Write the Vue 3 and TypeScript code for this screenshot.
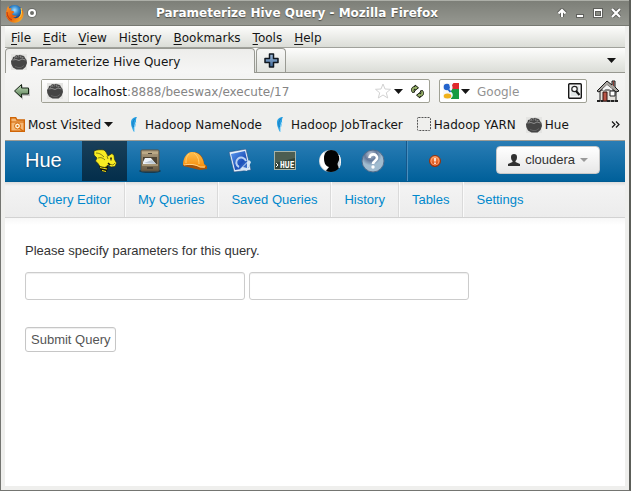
<script setup lang="ts">
import { ref } from 'vue'

interface MenuEntry { key: string; before: string; after: string }
interface Bookmark { label: string; icon: 'folder' | 'feather' | 'blank' | 'hue'; menu?: boolean }

const menus: MenuEntry[] = [
  { before: '', key: 'F', after: 'ile' },
  { before: '', key: 'E', after: 'dit' },
  { before: '', key: 'V', after: 'iew' },
  { before: 'Hi', key: 's', after: 'tory' },
  { before: '', key: 'B', after: 'ookmarks' },
  { before: '', key: 'T', after: 'ools' },
  { before: '', key: 'H', after: 'elp' },
]

const bookmarks: Bookmark[] = [
  { label: 'Most Visited', icon: 'folder', menu: true },
  { label: 'Hadoop NameNode', icon: 'feather' },
  { label: 'Hadoop JobTracker', icon: 'feather' },
  { label: 'Hadoop YARN', icon: 'blank' },
  { label: 'Hue', icon: 'hue' },
]

const apps: string[] = ['Beeswax', 'File Browser', 'Job Browser', 'Job Designer', 'Shell', 'User Admin', 'Help']
const sections: string[] = ['Query Editor', 'My Queries', 'Saved Queries', 'History', 'Tables', 'Settings']

const first = ref('')
const second = ref('')
const search = ref('')
</script>

<template>
  <div class="window">
    <svg class="defs" width="0" height="0" aria-hidden="true">
      <defs>
        <symbol id="paw" viewBox="0 0 16 16">
          <rect width="16" height="16" fill="#e4e4e2" />
          <path d="M0 7l1.500-2L2 3l2-.5L5 1l2.500.5L9 .8l2 .7 2 .5 1 2 1.500 2 .5 3-1.500 4-3 2.500H5.500L2 13.500 .3 10z" fill="#454545" />
          <path d="M3 4.500l1.500-1M7 3.500l1-1.200M11 4l1.500-.8M5 1.500l.5 2M9.500 1.500l.5 2.500M1.500 6L5 5.500 8 6.500l3-1.500 3.500 1" fill="none" stroke="#a0a0a0" stroke-width=".8" />
          <path d="M4 12.500l3 1h3l3-2" fill="none" stroke="#626262" />
        </symbol>
        <symbol id="down" viewBox="0 0 9 5"><path d="M0 0h9L4.500 5z" fill="#151515" /></symbol>
        <linearGradient id="green" x2="0" y2="1"><stop stop-color="#c3dcba" /><stop offset="1" stop-color="#527a50" /></linearGradient>
        <linearGradient id="plus" x2="0" y2="1"><stop stop-color="#a3c0e0" /><stop offset="1" stop-color="#3a6494" /></linearGradient>
        <linearGradient id="hat" x2="0" y2="1"><stop stop-color="#ffc050" /><stop offset="1" stop-color="#f58a08" /></linearGradient>
        <linearGradient id="cabinet" x2="0" y2="1"><stop stop-color="#b2a080" /><stop offset="1" stop-color="#675943" /></linearGradient>
        <linearGradient id="blueprint" x2="1" y2="1"><stop stop-color="#5c9af0" /><stop offset=".6" stop-color="#1c4fb8" /><stop offset="1" stop-color="#5c93e0" /></linearGradient>
        <radialGradient id="sphere" cx=".4" cy=".2"><stop stop-color="#c2ccda" /><stop offset=".55" stop-color="#63789a" /><stop offset="1" stop-color="#a0bbcf" /></radialGradient>
        <radialGradient id="globe" cx=".5" cy=".3"><stop stop-color="#a6ddff" /><stop offset=".5" stop-color="#3388cb" /><stop offset="1" stop-color="#123a82" /></radialGradient>
        <linearGradient id="fox" x2="1" y2="1"><stop stop-color="#ff9c27" /><stop offset=".5" stop-color="#e55b0b" /><stop offset="1" stop-color="#ffc52c" /></linearGradient>
        <linearGradient id="alert" x2="0" y2="1"><stop stop-color="#ff9653" /><stop offset="1" stop-color="#cf3c08" /></linearGradient>
      </defs>
    </svg>

    <header class="titlebar">
      <div class="title-left">
        <svg width="19" height="19" viewBox="0 0 19 19" aria-hidden="true">
          <circle cx="9.500" cy="9.500" r="8.500" fill="url(#globe)" />
          <path d="M3 2L1.500 6C-.5 11 2 17 8 18.500c6 1 10-3 10.500-8 .3-3-1-5-2.500-6.500.8 2 .8 5-.5 7-1.500 3-5 4-7.500 2.500 2 0 3-.8 4-2-2 .5-4 0-5-1.500l2-1.500-.5-1.500-3-.5 1-2.500-2 .5z" fill="url(#fox)" />
          <path d="M16 4c1 3 .8 7-1.500 9.500" fill="none" stroke="#ffd34d" />
          <path d="M2 8c0 4 2 7 5 8" fill="none" stroke="#bb3210" />
        </svg>
        <svg width="10" height="10" viewBox="0 0 10 10" aria-hidden="true"><circle cx="5" cy="5" r="5" fill="#6c6e69" /><circle cx="5" cy="5" r="3" fill="none" stroke="#fff" stroke-width="2" /></svg>
      </div>
      <h1 class="title">Parameterize Hive Query - Mozilla Firefox</h1>
      <div class="window-buttons">
        <button type="button" aria-label="Shade"><svg width="10" height="10" viewBox="0 0 10 10"><path d="M5 9V2M1.500 5.500L5 2l3.500 3.500" fill="none" stroke="#5f605c" stroke-width="4" /><path d="M5 9V2M1.500 5.500L5 2l3.500 3.500" fill="none" stroke="#fff" stroke-width="2" /></svg></button>
        <button type="button" aria-label="Minimize"><svg width="10" height="10" viewBox="0 0 10 10"><path d="M1 6h8v4H1z" fill="#5f605c" /><path d="M2 7h6v2H2z" fill="#fff" /></svg></button>
        <button type="button" aria-label="Maximize"><svg width="10" height="10" viewBox="0 0 10 10"><path d="M0 0h10v10H0z" fill="#5f605c" /><path d="M1 1h8v8H1z" fill="#fff" /><path d="M2 3h6v5H2z" fill="#5f605c" /><path d="M3 4h4v3H3z" fill="#898b84" /></svg></button>
        <button type="button" aria-label="Close"><svg width="10" height="10" viewBox="0 0 10 10"><path d="M1 1l8 8M9 1L1 9" stroke="#5f605c" stroke-width="4" /><path d="M1 1l8 8M9 1L1 9" stroke="#fff" stroke-width="2.200" /></svg></button>
      </div>
    </header>

    <div class="body">
      <nav class="menubar" aria-label="Menu">
        <button v-for="m in menus" :key="m.key + m.after" type="button">{{ m.before }}<u>{{ m.key }}</u>{{ m.after }}</button>
      </nav>

      <div class="tabs">
        <button class="tab" type="button">
          <svg width="16" height="16" aria-hidden="true"><use href="#paw" /></svg>
          <span>Parameterize Hive Query</span>
        </button>
        <button class="new-tab" type="button" aria-label="New tab">
          <svg width="15" height="15" viewBox="0 0 15 15"><path d="M5.500 1h4v4.500H14v4H9.500V14h-4V9.500H1v-4h4.500z" fill="url(#plus)" stroke="#101820" stroke-width="1.500" stroke-linejoin="round" /></svg>
        </button>
        <button class="all-tabs" type="button" aria-label="List all tabs"><svg width="9" height="5"><use href="#down" /></svg></button>
      </div>

      <div class="toolbar">
        <button class="back" type="button" aria-label="Back">
          <svg width="18" height="17" viewBox="0 0 18 17"><path d="M1 8L9 1v4h7v7H9v4z" transform="translate(1 1)" fill="#c4c4c4" /><path d="M1.500 8L8.500 1.500V5H15.500v6H8.500v3.500z" fill="url(#green)" stroke="#172417" /></svg>
        </button>
        <div class="address">
          <span class="site"><svg width="16" height="16" aria-hidden="true"><use href="#paw" /></svg></span>
          <span class="url"><b>localhost</b>:8888/beeswax/execute/17</span>
          <button type="button" aria-label="Bookmark this page"><svg width="16" height="16" viewBox="0 0 16 16"><path d="M8 1l2 5 5.500.3-4.200 3.500 1.400 5.200L8 12l-4.700 3 1.400-5.200L.5 6.300 6 6z" fill="#fff" stroke="#d2d2d2" /></svg></button>
          <button class="drop" type="button" aria-label="Show history"><svg width="9" height="5"><use href="#down" /></svg></button>
          <button type="button" aria-label="Reload">
            <svg width="15" height="15" viewBox="0 0 15 15"><path d="M2.500 8.500C.5 6 1.500 2.500 5 2.500V1l3.500 2.800L5 6.500V5C3.800 5.200 3.800 6.500 4.800 8z" fill="#9ab46c" stroke="#151a0d" /><path d="M12.500 6.500c2 2.500 1 6-2.500 6V14l-3.500-2.800L10 8.500V10c1.200-.2 1.200-1.500.2-3z" fill="#9ab46c" stroke="#151a0d" /></svg>
          </button>
        </div>
        <div class="search">
          <button class="engine" type="button" aria-label="Choose search engine">
            <svg width="16" height="16" viewBox="0 0 16 16"><rect width="16" height="16" fill="#f8f8f8" /><path d="M8 0h8v6H8z" fill="#df292c" /><path d="M8 6h8v10H8z" fill="#169b42" /><circle cx="4" cy="4" r="3.300" fill="#2464cc" /><path d="M6 0h4.500L9 2C10.500 6 8.500 7.500 7.500 8l2 2.500C10.500 13 9 15 7 16H4l3-4-2-4 2-3z" fill="#f5f8fc" /><ellipse cx="4.500" cy="13" rx="3.800" ry="2.500" fill="#f1b21b" /><path d="M5.500 6.500l2 2.500" stroke="#2464cc" stroke-width="2" /></svg>
            <svg width="9" height="5"><use href="#down" /></svg>
          </button>
          <input v-model="search" type="text" placeholder="Google" aria-label="Search with Google">
          <button type="button" aria-label="Search"><svg width="14" height="16" viewBox="0 0 14 16"><rect x=".7" y=".7" width="12.600" height="14.600" rx="1" fill="#f5f5f5" stroke="#171717" stroke-width="1.400" /><path d="M3 3h8v10H3z" fill="#e0e5e5" /><circle cx="6.500" cy="6" r="2.700" fill="#fff" stroke="#222" stroke-width="1.200" /><path d="M8 8l3.500 4" stroke="#111" stroke-width="2" /></svg></button>
        </div>
        <button class="home" type="button" aria-label="Home">
          <svg width="24" height="22" viewBox="0 0 24 22"><path d="M4 10h16v11H4z" fill="#e6e3de" stroke="#222" /><path d="M11 1L1 11l2 1 8-7 9 7 3-1-4-4V1h-3v4z" fill="#a9a5a0" stroke="#171717" /><path d="M7 10l4-4 5 4" fill="none" stroke="#f5f5f5" stroke-width="2" /><path d="M7 12h4v9H7z" fill="#ba5546" stroke="#32130e" /><path d="M14 11h5v5h-5z" fill="#fff" stroke="#222" /><path d="M17.500 1v5" stroke="#8a3d36" /><path d="M1 21h6M11 21h12" stroke="#222" stroke-width="2" stroke-dasharray="3 1" /></svg>
        </button>
      </div>

      <nav class="bookmarks" aria-label="Bookmarks">
        <a v-for="b in bookmarks" :key="b.label" href="#" :class="b.icon">
          <svg v-if="b.icon === 'folder'" width="15" height="15" viewBox="0 0 15 15"><path d="M.7 2V.7h5L7 3h7.300v11.300H.7z" fill="#f6b875" stroke="#cf6506" stroke-width="1.400" /><path d="M1 5h13" stroke="#cf6506" /><circle cx="7.500" cy="9" r="3" fill="#fff0d5" stroke="#d76d0c" /><circle cx="7.500" cy="9" r="1" fill="#d76d0c" /><path d="M9 11l4 3" stroke="#d76d0c" stroke-width="1.500" /></svg>
          <svg v-else-if="b.icon === 'feather'" width="8" height="15" viewBox="0 0 8 15"><path d="M7 0C3 0 .8 2.500 1 6c0 3 1 4 1.500 6 .4 1.500 1 2.500 1.800 3-.3-3 1-5 1.500-8C6.200 4 5.500 2 7 0z" fill="#2aa2e4" /><path d="M6 5C5 8 4 11 4.300 15" fill="none" stroke="#a6def8" /><path d="M5 1.500C2.500 4 2.500 7 3.300 10" fill="none" stroke="#1478bd" /></svg>
          <svg v-else-if="b.icon === 'blank'" width="15" height="15" viewBox="0 0 15 15"><rect x=".5" y=".5" width="13" height="13" rx="1" fill="none" stroke="#555" stroke-dasharray="2 1" /></svg>
          <svg v-else width="16" height="16"><use href="#paw" /></svg>
          <span>{{ b.label }}</span>
          <svg v-if="b.menu" width="9" height="5"><use href="#down" /></svg>
        </a>
        <button type="button" aria-label="More bookmarks"><svg width="9" height="7" viewBox="0 0 9 7"><path d="M1 .5l3 3-3 3M5 .5l3 3-3 3" fill="none" stroke="#151515" stroke-width="1.200" /></svg></button>
      </nav>

      <div class="hue-bar">
        <a class="brand" href="#">Hue</a>
        <nav class="apps" aria-label="Applications">
          <a v-for="(app, i) in apps" :key="app" href="#" :aria-label="app" :class="{ active: i === 0 }">
            <svg v-if="i === 0" width="24" height="24" viewBox="0 0 24 24">
              <path d="M8 13l5 1 2 4-1 4-2 1.500-4-2-2-4z" fill="#101008" />
              <path d="M7 15.500l7 1.500M7 18.500l7 1.500M9 21.500l4 1" stroke="#f3e41b" stroke-width="1.200" />
              <path d="M1 2C4 .5 8 .5 11 1l2 2 2 4 4-2.500 2 2 .5 4 2 3.500-1.500 3.500-4 .5-3-2-3 2.500-5-1-2-3L2.500 12 4 9 1 6z" fill="#f8ec22" stroke="#24270e" stroke-width=".6" />
              <path d="M3 4c3 0 5 1 8 4M5 9c3-1 5 0 7 2M14 7l1 3M16 15l4 1 2-2M18 10v2" fill="none" stroke="#6a6812" stroke-width=".8" />
              <path d="M18 8.500v2M15 14l2 2" stroke="#111" stroke-width="1.500" />
            </svg>
            <svg v-else-if="i === 1" width="22" height="24" viewBox="0 0 22 24"><ellipse cx="11" cy="22" rx="11" ry="2" fill="#173b50" /><rect x="2" y="1" width="18" height="21" rx="1" fill="url(#cabinet)" stroke="#5d5341" /><path d="M3 4h16M3 16h16" stroke="#d1be96" /><path d="M4 8h14v7H4z" fill="#4d4333" /><path d="M4 13l2-4 6 0 5 6H4z" fill="#eef3f8" /><path d="M5 14l8-3 4 4z" fill="#bcc8d4" /><path d="M9 4h4v1H9zM8 18h6v2H8z" fill="#494236" /></svg>
            <svg v-else-if="i === 2" width="26" height="20" viewBox="0 0 26 20"><path d="M1 15C1 8 4 2 10 1c7-1 12 5 12 12l3 2v3l-7 1z" fill="#a55208" /><path d="M1 14C1 7 5 1 10 1c7 0 11 5 12 12l2 2-2 2-5-1C12 13 5 14 1 14z" fill="url(#hat)" /><path d="M12 2c4 3 5 7 5 11M7 3C4 6 4 9 4 12" fill="none" stroke="#ffd070" /><path d="M2 14c5-1 11-1 16 2l5 0" fill="none" stroke="#ffd68a" /></svg>
            <svg v-else-if="i === 3" width="24" height="24" viewBox="0 0 24 24"><path d="M1 3l17-3 5 21-17 2z" fill="#e4eff9" stroke="#294f83" stroke-width=".6" /><path d="M3 5l14-3 4 17-14 2z" fill="url(#blueprint)" /><path d="M11 18a5 5 0 1 1 7-6" fill="none" stroke="#b9d2f2" stroke-width="2" /><path d="M12 20l9-9 2 2-4 9z" fill="#d5e4f5" /><path d="M15 18l4-4v5z" fill="#3b6cc8" /></svg>
            <svg v-else-if="i === 4" width="22" height="20" viewBox="0 0 22 20"><rect x=".5" y=".5" width="21" height="18" fill="#334439" stroke="#a6b3a9" /><path d="M1 1h20v6L1 12z" fill="#65776b" opacity=".5" /><text x="6" y="17" class="term">HUE</text><path d="M2 12l2 2-2 2" fill="none" stroke="#fff" /></svg>
            <svg v-else-if="i === 5" width="22" height="24" viewBox="0 0 22 24"><circle cx="11" cy="12" r="11" fill="#c4d0d8" /><path d="M5 3a11 11 0 0 0 1 18l5-3z" fill="#fff" /><path d="M12 1c6 0 9 5 8 10-1 3-2 3-1 6l1 2c-3 4-8 5-13 3l3-4c-4-1-5-5-5-9 0-5 3-8 7-8z" fill="#020303" /><path d="M20 6c2 5 2 9 0 13" fill="none" stroke="#f7f7f7" /></svg>
            <svg v-else width="24" height="24" viewBox="0 0 24 24"><circle cx="12" cy="12" r="11" fill="url(#sphere)" stroke="#536c8b" /><path d="M8.500 9c0-5 8-4.500 7.500 0 0 2.500-4 3-4 6" fill="none" stroke="#fff" stroke-width="2.700" /><circle cx="12" cy="18" r="1.700" fill="#fff" /></svg>
          </a>
        </nav>
        <a class="warning" href="#" aria-label="Configuration warning"><svg width="12" height="12" viewBox="0 0 12 12"><circle cx="6" cy="6" r="5.500" fill="url(#alert)" stroke="#8b3212" /><circle cx="6" cy="6" r="4" fill="none" stroke="#ffb283" stroke-width=".7" /><path d="M6 3v3.500M6 7.500v1.500" stroke="#fff" stroke-width="1.500" /></svg></a>
        <button class="user" type="button">
          <svg width="12" height="12" viewBox="0 0 12 12" aria-hidden="true"><path d="M6 0c2 0 3 1 3 3 0 2-.5 3-1.500 4v1l4.500 2v2H0v-2l4.500-2V7C3.500 6 3 5 3 3c0-2 1-3 3-3z" fill="#303030" /></svg>
          <span>cloudera</span><i></i>
        </button>
      </div>

      <nav class="sections" aria-label="Beeswax">
        <a v-for="s in sections" :key="s" href="#">{{ s }}</a>
      </nav>

      <main>
        <form @submit.prevent>
          <p>Please specify parameters for this query.</p>
          <div class="fields">
            <input v-model="first" type="text" aria-label="First parameter">
            <input v-model="second" type="text" aria-label="Second parameter">
          </div>
          <button type="submit">Submit Query</button>
        </form>
      </main>
    </div>
  </div>
</template>

<style>
body { background: #fff; }
#app { min-height: 100vh; display: flex; }
</style>

<style scoped>
* { box-sizing: border-box; }
.window { flex: 1; min-width: 0; display: flex; flex-direction: column; background: #efefed; border: solid #747571; border-width: 0 2px 1px 1px; border-right-color: #5c5e59; font: 12px/16px "DejaVu Sans", sans-serif; color: #151515; }
.defs { position: absolute; }
svg { display: block; flex: none; }
button { margin: 0; padding: 0; border: 0; background: none; font: inherit; color: inherit; }
a { color: inherit; text-decoration: none; }
.titlebar { height: 26px; padding: 0 8px 0 4px; display: grid; grid-template-columns: auto 1fr auto; align-items: center; background: linear-gradient(#7d7f78, #969891); border-top: 1px solid #adafa8; border-bottom: 1px solid #777972; }
.title-left { display: flex; align-items: center; gap: 3px; }
.title { margin: 0; text-align: center; font-size: 12px; font-weight: bold; color: #fff; text-shadow: 0 1px 1px #484945; white-space: nowrap; }
.window-buttons { display: flex; justify-content: flex-end; gap: 8px; }
.body { flex: 1; display: flex; flex-direction: column; padding: 0 4px 4px; }
.menubar { height: 22px; padding: 2px 6px 0; display: flex; align-items: center; gap: 12px; background: linear-gradient(#fdfdfc, #dbddd7); border-bottom: 1px solid #a0a19b; }
u { text-underline-offset: 2px; }
.tabs { height: 25px; display: flex; align-items: flex-end; background: linear-gradient(#fdfdfc, #dbddd7); border-bottom: 1px solid #979890; }
.tab, .new-tab { height: 24px; border: 1px solid #999a93; border-bottom: 0; border-radius: 4px 4px 0 0; }
.tab { width: 250px; height: 25px; margin-bottom: -1px; padding: 2px 5px 0; display: flex; align-items: center; gap: 3px; background: linear-gradient(#ededeb, #f6f6f5); }
.new-tab { width: 30px; margin-left: 1px; display: flex; align-items: center; justify-content: center; background: linear-gradient(#f8f8f7, #e1e3de); }
.all-tabs { height: 24px; margin-left: auto; padding: 0 9px; }
.toolbar { height: 36px; padding: 0 5px 0 8px; display: flex; align-items: center; gap: 9px; background: linear-gradient(#f5f5f4, #efefed); }
.back { width: 19px; }
.address, .search { height: 24px; display: flex; align-items: center; background: #fff; border: 1px solid #a0a195; border-radius: 2px; }
.address { flex: 1; min-width: 0; padding-right: 4px; }
.site { width: 27px; height: 22px; display: flex; align-items: center; justify-content: center; background: linear-gradient(#fff, #ededeb); border-right: 1px solid #dddeda; }
.url { flex: 1; min-width: 0; padding: 1px 0 0 4px; color: #858585; white-space: nowrap; overflow: hidden; }
.url b { color: #151515; font-weight: normal; }
.drop { padding: 0 7px 0 3px; }
.search { width: 148px; padding: 0 4px 0 3px; }
.engine { display: flex; align-items: center; gap: 2px; }
.search input { flex: 1; min-width: 0; padding: 1px 0 0 7px; border: 0; outline: 0; background: none; font: inherit; color: #222; }
.search input::placeholder { color: #929292; opacity: 1; }
.bookmarks { height: 32px; padding: 0 5px; display: flex; align-items: center; background: #efefed; border-bottom: 1px solid #9e9c94; white-space: nowrap; }
.bookmarks a { display: flex; align-items: center; gap: 3px; }
.bookmarks .folder { margin-right: 17px; }
.bookmarks .feather { gap: 7px; margin-right: 14px; }
.bookmarks .blank { gap: 2px; margin-right: 10px; }
.bookmarks button { margin-left: auto; }
.hue-bar { height: 41px; display: flex; background: linear-gradient(#2a7db5, #00609a); border-bottom: 1px solid #005b92; color: #fff; }
.brand { width: 77px; padding-left: 20px; font: 20px/38px "Liberation Sans", Arial, sans-serif; text-shadow: 0 1px 2px #17476a; }
.apps { display: flex; border-right: 1px solid #16578a; }
.apps a { width: 45px; display: flex; align-items: center; justify-content: center; }
.apps .active { background: linear-gradient(#193f59, #032e4b); }
.apps a:last-child { width: 54px; padding-right: 12px; }
.term { font: bold 8px "DejaVu Sans Mono", monospace; fill: #fff; }
.warning { width: 54px; display: flex; align-items: center; justify-content: center; border-left: 1px solid #488fbf; }
.user { height: 28px; margin: 5px 25px 0 auto; padding: 0 11px 0 11px; display: flex; align-items: center; gap: 5px; background: linear-gradient(#fff, #e7e7e7); border: 1px solid #c8c8c8; border-radius: 4px; font: 13px/18px "Liberation Sans", Arial, sans-serif; color: #333; }
.user i { border: solid transparent; border-width: 4px 4px 0; border-top-color: #999; }
.sections { height: 36px; padding-left: 20px; display: flex; align-items: stretch; background: linear-gradient(#dcdcdc, #f3f3f3 4px, #ececec); border-bottom: 1px solid #d2d2d2; font: 13px/36px "Liberation Sans", Arial, sans-serif; color: #0088cc; }
.sections a { padding: 0 13px; border-right: 1px solid #dadada; box-shadow: 1px 0 #fafafa; }
.sections a:last-child { border: 0; box-shadow: none; }
main { flex: 1; padding: 24px 20px; background: linear-gradient(#f7f7f7, #fff 7px); font: 13px/18px "Liberation Sans", Arial, sans-serif; color: #333; }
p { margin: 0 0 12px; }
.fields { display: flex; flex-wrap: wrap; gap: 4px; margin-bottom: 27px; }
.fields input { width: 220px; height: 28px; padding: 4px; border: 1px solid #ccc; border-radius: 3px; box-shadow: inset 0 1px 1px #eee; font: inherit; color: #555; }
form > button { height: 25px; padding: 0 5px; background: #fff; border: 1px solid #c6c6c6; border-radius: 3px; box-shadow: inset 0 1px 1px #eee; color: #555; }
</style>
